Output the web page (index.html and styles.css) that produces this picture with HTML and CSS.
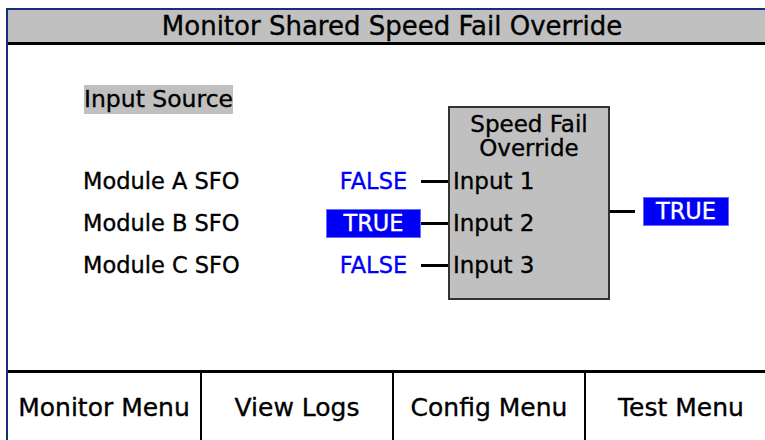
FILE: index.html
```html
<!DOCTYPE html>
<html lang="en">
<head>
    <meta charset="UTF-8">
    <title>Monitor Shared Speed Fail Override</title>
    <link rel="stylesheet" href="styles.css">
</head>
<body>

<div class="screen">
    <div class="title">Monitor Shared Speed Fail Override</div>

    <div class="main">
        <div class="diagram">
            <div class="sources">
                <div class="source-head"><span class="tag">Input Source</span></div>
                <div class="row">
                    <span class="label">Module A SFO</span>
                    <span class="value">FALSE</span>
                    <span class="wire"></span>
                </div>
                <div class="row">
                    <span class="label">Module B SFO</span>
                    <span class="value on">TRUE</span>
                    <span class="wire"></span>
                </div>
                <div class="row">
                    <span class="label">Module C SFO</span>
                    <span class="value">FALSE</span>
                    <span class="wire"></span>
                </div>
            </div>

            <div class="block">
                <div class="block-title">Speed Fail<br>Override</div>
                <div class="port">Input 1</div>
                <div class="port">Input 2</div>
                <div class="port">Input 3</div>
            </div>

            <div class="output">
                <span class="wire out-wire"></span>
                <span class="value on out">TRUE</span>
            </div>
        </div>
    </div>

    <div class="menu">
        <div class="menu-item">Monitor Menu</div>
        <div class="menu-item">View Logs</div>
        <div class="menu-item">Config Menu</div>
        <div class="menu-item">Test Menu</div>
    </div>
</div>

</body>
</html>
```

FILE: styles.css
```css
body, html {
    margin:0;
    padding:0;
    background:#fff;
    color:#000;
    overflow:hidden;
    font-family:"DejaVu Sans", sans-serif;
    -webkit-text-stroke:0.35px;
}
.screen {
    margin:8px 0 0 6px;
    width:768px;
    border-left:2px solid #14307a;
    border-top:2px solid #14307a;
}
.title {
    height:32px;
    line-height:32px;
    background:#c0c0c0;
    border-bottom:3px solid #000;
    text-align:center;
    font-size:26px;
}
.main {
    height:325px;
    padding:40px 0 0 75px;
    box-sizing:border-box;
}
.diagram {
    display:flex;
    align-items:flex-start;
}
.sources {
    width:365px;
}
.source-head {
    height:29px;
    margin-bottom:46px;
}
.tag {
    display:inline-block;
    margin-left:1px;
    background:#c0c0c0;
    font-size:23.5px;
    line-height:29px;
}
.row {
    display:flex;
    align-items:center;
    height:42px;
}
.label {
    width:243px;
    font-size:22.5px;
}
.value {
    width:95px;
    height:29px;
    line-height:29px;
    text-align:center;
    color:#0000f8;
    font-size:22.5px;
    box-sizing:border-box;
}
.value.on {
    background:#0000f8;
    color:#fff;
    border:1px solid #6a6aff;
    line-height:27px;
}
.value.out {
    width:86px;
}
.wire {
    width:27px;
    height:3px;
    background:#000;
}
.block {
    margin-top:21px;
    width:162px;
    height:194px;
    box-sizing:border-box;
    border:2px solid #333;
    background:#c0c0c0;
    padding-top:4px;
}
.block-title {
    text-align:center;
    font-size:23px;
    line-height:24px;
}
.port {
    height:42px;
    line-height:42px;
    font-size:23px;
    padding-left:3px;
}
.output {
    display:flex;
    align-items:center;
    margin-top:112px;
}
.out-wire {
    width:25px;
    margin-right:8px;
}
.menu {
    display:grid;
    grid-template-columns:repeat(4, 1fr);
    border-top:3px solid #000;
}
.menu-item {
    line-height:69px;
    text-align:center;
    font-size:25px;
}
.menu-item + .menu-item {
    border-left:2px solid #000;
}
```
